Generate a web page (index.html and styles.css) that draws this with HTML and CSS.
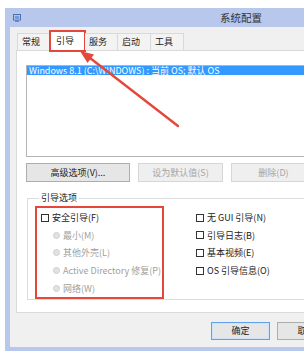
FILE: index.html
```html
<!DOCTYPE html>
<html>
<head>
    <meta charset="utf-8">
    <title>系统配置</title>
    <link rel="stylesheet" href="styles.css">
</head>
<body>
<div class="window">
    <div class="titlebar">
        <svg class="app-icon" width="8" height="8" viewBox="0 0 8 8">
            <rect x="0.5" y="0.5" width="7" height="5.5" fill="#dfe7f5" stroke="#4f6fa8"/>
            <rect x="1.5" y="1.5" width="5" height="3.5" fill="#6f9be0"/>
            <rect x="2" y="6.5" width="4" height="1.2" fill="#4f6fa8"/>
        </svg>
        <p class="title">系统配置</p>
        <span></span>
    </div>
    <div class="client">
        <div class="tabs">
            <a href="#" class="tab">常规</a>
            <a href="#" class="tab active">引导</a>
            <a href="#" class="tab">服务</a>
            <a href="#" class="tab">启动</a>
            <a href="#" class="tab">工具</a>
        </div>
        <div class="panel">
            <div class="listbox">
                <div class="list-item selected">Windows 8.1 (C:\WINDOWS) : 当前 OS; 默认 OS</div>
            </div>
            <div class="btn-row">
                <a href="#" class="btn btn-adv">高级选项(V)...</a>
                <a href="#" class="btn btn-default disabled">设为默认值(S)</a>
                <a href="#" class="btn btn-del disabled">删除(D)</a>
            </div>
            <fieldset class="group">
                <legend>引导选项</legend>
                <div class="group-body">
                    <div class="col-left">
                        <div class="opt"><span class="check"></span>安全引导(F)</div>
                        <div class="opt sub off"><span class="radio"></span>最小(M)</div>
                        <div class="opt sub off"><span class="radio"></span>其他外壳(L)</div>
                        <div class="opt sub off"><span class="radio"></span>Active Directory 修复(P)</div>
                        <div class="opt sub off"><span class="radio"></span>网络(W)</div>
                    </div>
                    <div class="col-right">
                        <div class="opt"><span class="check"></span>无 GUI 引导(N)</div>
                        <div class="opt"><span class="check"></span>引导日志(B)</div>
                        <div class="opt"><span class="check"></span>基本视频(E)</div>
                        <div class="opt"><span class="check"></span>OS 引导信息(O)</div>
                    </div>
                </div>
            </fieldset>
        </div>
        <div class="footer">
            <a href="#" class="btn btn-foot primary">确定</a>
            <a href="#" class="btn btn-foot">取消</a>
        </div>
    </div>
</div>
<!-- 标注箭头 -->
<svg class="arrow" width="304" height="351" viewBox="0 0 304 351">
    <line x1="178" y1="126" x2="90" y2="58" stroke="#e5473b" stroke-width="2.4" stroke-linecap="round"/>
    <polygon points="80,51 94,54.5 87.5,63" fill="#e5473b"/>
</svg>
</body>
</html>
```

FILE: styles.css
```css
html, body{
    margin: 0;
    padding: 0;
}
body{
    width: 304px;
    height: 351px;
    overflow: hidden;
    background: #fff;
    font-family: "Noto Sans CJK SC", "Noto Sans", sans-serif;
    font-size: 9px;
    color: #222;
    position: relative;
}
p{
    margin: 0;
    padding: 0;
}
a{
    text-decoration: none;
    color: #222;
}
.window{
    margin: 8px 0 0 5px;
    width: 472px;
    padding: 0 5px 5px;
    box-sizing: border-box;
    background: #b7c8ec;
}
.titlebar{
    height: 19px;
    display: grid;
    grid-template-columns: 1fr auto 1fr;
    align-items: center;
}
.app-icon{
    margin-left: 3px;
    display: block;
}
.title{
    font-size: 10.5px;
    color: #333;
}
.client{
    background: #f0f0f0;
    padding: 4px 4px 7px 6px;
}
.tabs{
    display: flex;
    align-items: flex-end;
    margin-left: 1px;
    position: relative;
    z-index: 2;
}
.tab{
    display: block;
    width: 33px;
    height: 17px;
    line-height: 16px;
    padding-left: 4px;
    box-sizing: border-box;
    border: 1px solid #d9d9d9;
    border-bottom: none;
    border-left: none;
    background: #f3f3f3;
}
.tab:first-child{
    border-left: 1px solid #d9d9d9;
}
.tab.active{
    width: 35px;
    height: 20px;
    line-height: 18px;
    padding-left: 5px;
    margin-bottom: -1px;
    background: #fff;
    border-left: 1px solid #d9d9d9;
    outline: 2px solid #e5473b;
    outline-offset: -1px;
}
.panel{
    height: 263px;
    box-sizing: border-box;
    background: #fff;
    border: 1px solid #d9d9d9;
    padding: 14px 0 0 9px;
}
.listbox{
    height: 92px;
    box-sizing: border-box;
    border: 1px solid #b4b4b4;
    padding: 0;
}
.list-item{
    height: 9px;
    line-height: 9px;
    padding-left: 2px;
    white-space: nowrap;
}
.list-item.selected{
    background: #3399ff;
    color: #fff;
}
.btn-row{
    display: flex;
    gap: 8px;
    margin-top: 6px;
}
.btn{
    display: block;
    height: 19px;
    line-height: 17px;
    box-sizing: border-box;
    text-align: center;
    border: 1px solid #adadad;
    background: #e6e6e6;
}
.btn.disabled{
    color: #a5a5a5;
    border-color: #d6d6d6;
    background: #efefef;
}
.btn-adv{
    width: 104px;
}
.btn-default{
    width: 85px;
}
.btn-del{
    width: 85px;
}
.group{
    margin: 10px 0 0 1px;
    padding: 0 0 3px 7px;
    border: 1px solid #dcdcdc;
    height: 108px;
    box-sizing: border-box;
}
.group legend{
    padding: 0 2px;
    margin-left: 4px;
    line-height: 12px;
}
.group-body{
    display: flex;
    align-items: flex-start;
    margin-top: 2px;
}
.col-left{
    width: 129px;
    height: 93px;
    box-sizing: border-box;
    border: 2px solid #e5473b;
    padding: 1px 0 0 4px;
}
.col-right{
    margin-left: 32px;
    padding-top: 3px;
}
.opt{
    height: 17.6px;
    display: flex;
    align-items: center;
    white-space: nowrap;
}
.opt.sub{
    padding-left: 12px;
}
.opt.off{
    color: #a0a0a0;
}
.check{
    width: 8px;
    height: 8px;
    box-sizing: border-box;
    border: 1px solid #333;
    background: #fff;
    margin-right: 3px;
}
.radio{
    width: 7px;
    height: 7px;
    box-sizing: border-box;
    border-radius: 50%;
    border: 1px solid #cfcfcf;
    background: #e2e2e2;
    margin-right: 3px;
}
.footer{
    display: flex;
    gap: 7px;
    margin-top: 9px;
    padding-left: 195px;
}
.btn-foot{
    width: 59px;
    height: 18px;
    line-height: 16px;
}
.btn-foot.primary{
    border-color: #5ea3ea;
    box-shadow: inset 0 0 0 1px #cde3f9;
}
.arrow{
    position: absolute;
    left: 0;
    top: 0;
    pointer-events: none;
}
```
